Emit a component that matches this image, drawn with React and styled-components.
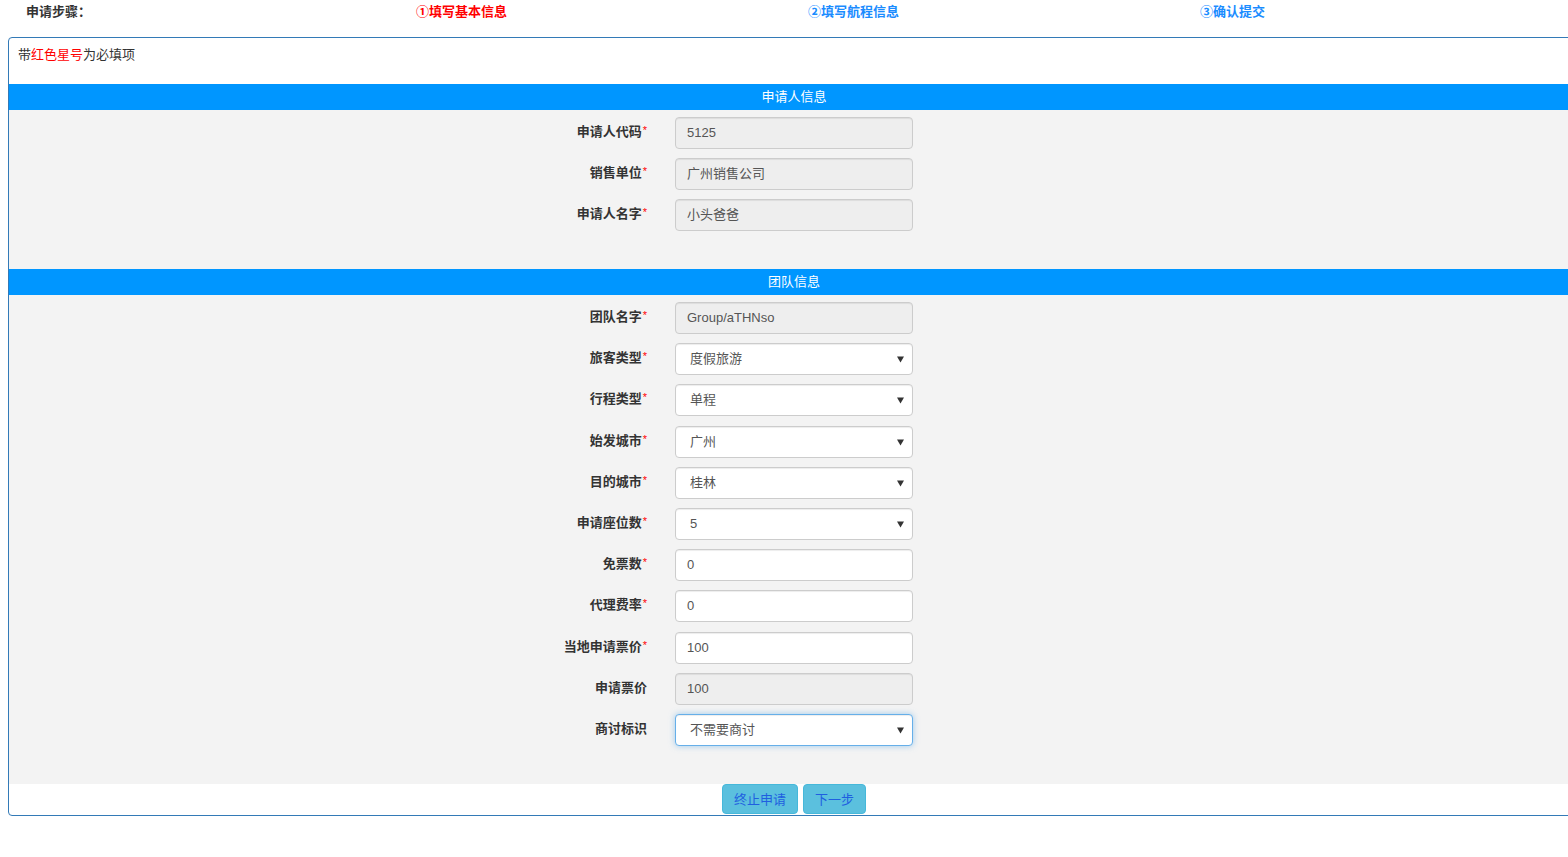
import React from "react";
import styled, { createGlobalStyle } from "styled-components";

const GlobalStyle = createGlobalStyle`
  html, body {
    margin: 0;
    padding: 0;
    background: #fff;
    overflow: hidden;
  }
  body {
    font-family: "Liberation Sans", "Noto Sans CJK SC", sans-serif;
    font-size: 13px;
    color: #333;
  }
`;

const Page = styled.div`
  width: 1568px;
`;

const Steps = styled.ul`
  display: grid;
  grid-template-columns: repeat(4, 392px);
  margin: 0;
  padding: 0;
  list-style: none;
  height: 24px;
  margin-bottom: 13px;
`;

const Step = styled.li`
  padding-left: ${(p) => (p.$first ? "26px" : "24px")};
  line-height: 24px;
  font-weight: 700;
  font-size: 13px;
  color: ${(p) => p.$color || "#333"};
`;

const Panel = styled.div`
  margin-left: 8px;
  width: 1572px;
  box-sizing: border-box;
  border: 1px solid #337ab7;
  border-radius: 4px;
  overflow: hidden;
`;

const Note = styled.div`
  padding: 8px 9px 20px;
  line-height: 18px;
  color: #333;
`;

const Red = styled.span`
  color: #f00;
`;

const SectionTitle = styled.div`
  height: 26px;
  line-height: 26px;
  background: #0096ff;
  color: #fff;
  text-align: center;
  font-size: 13px;
`;

const Section = styled.div`
  background: #f3f3f3;
  padding: 7px 0 ${(p) => p.$bottom}px;
  display: flex;
  flex-direction: column;
  gap: ${(p) => p.$gap}px;
`;

const Row = styled.div`
  display: grid;
  grid-template-columns: 1fr 238px 1fr;
  align-items: center;
  height: 32px;
`;

const Label = styled.label`
  text-align: right;
  padding-right: 28px;
  font-weight: 700;
  color: #333;
  line-height: 18px;
  margin-top: -2px;
`;

const Star = styled.span`
  color: #f00;
  font-weight: 400;
  font-size: 11px;
  line-height: 0;
  vertical-align: 2px;
  margin-left: 1px;
`;

const Field = styled.div`
  position: relative;
  height: 32px;
  box-sizing: border-box;
  border: 1px solid ${(p) => (p.$focus ? "#66afe9" : "#ccc")};
  border-radius: 4px;
  background: ${(p) => (p.$readOnly ? "#eee" : "#fff")};
  box-shadow: ${(p) =>
    p.$focus
      ? "inset 0 1px 1px rgba(0,0,0,.075), 0 0 6px rgba(102,175,233,.6)"
      : "inset 0 1px 1px rgba(0,0,0,.075)"};
  padding-left: ${(p) => (p.$select ? "14px" : "11px")};
  line-height: 30px;
  color: #555;
  font-size: 13px;
`;

const Arrow = styled.svg`
  position: absolute;
  right: 8px;
  top: 12px;
  width: 7px;
  height: 7px;
`;

const Footer = styled.div`
  display: flex;
  justify-content: center;
  gap: 5px;
  height: 31px;
`;

const Button = styled.button`
  height: 30px;
  padding: 0 11px;
  border: 1px solid #46b8da;
  border-radius: 4px;
  background: #5bc0de;
  color: #1f5fe0;
  font-family: "Liberation Sans", "Noto Sans CJK SC", sans-serif;
  font-size: 13px;
  cursor: pointer;
`;

const FormRow = ({ label, required = true, value, readOnly, select, focus }) => (
  <Row>
    <Label>
      {label}
      {required && <Star>*</Star>}
    </Label>
    <Field $readOnly={readOnly} $select={select} $focus={focus}>
      {value}
      {select && (
        <Arrow viewBox="0 0 7 7">
          <path d="M0 0.5 H7 L3.5 6.5 Z" fill="#333" />
        </Arrow>
      )}
    </Field>
    <div />
  </Row>
);

const applicant = [
  { label: "申请人代码", value: "5125", readOnly: true },
  { label: "销售单位", value: "广州销售公司", readOnly: true },
  { label: "申请人名字", value: "小头爸爸", readOnly: true },
];

const team = [
  { label: "团队名字", value: "Group/aTHNso", readOnly: true },
  { label: "旅客类型", value: "度假旅游", select: true },
  { label: "行程类型", value: "单程", select: true },
  { label: "始发城市", value: "广州", select: true },
  { label: "目的城市", value: "桂林", select: true },
  { label: "申请座位数", value: "5", select: true },
  { label: "免票数", value: "0" },
  { label: "代理费率", value: "0" },
  { label: "当地申请票价", value: "100" },
  { label: "申请票价", value: "100", readOnly: true, required: false },
  { label: "商讨标识", value: "不需要商讨", select: true, focus: true, required: false },
];

export default function App() {
  return (
    <Page>
      <GlobalStyle />
      <Steps>
        <Step $first>申请步骤：</Step>
        <Step $color="#f00">①填写基本信息</Step>
        <Step $color="#1a8cff">②填写航程信息</Step>
        <Step $color="#1a8cff">③确认提交</Step>
      </Steps>
      <Panel>
        <Note>
          带<Red>红色星号</Red>为必填项
        </Note>
        <SectionTitle>申请人信息</SectionTitle>
        <Section $gap={9} $bottom={38}>
          {applicant.map((r) => (
            <FormRow key={r.label} {...r} />
          ))}
        </Section>
        <SectionTitle>团队信息</SectionTitle>
        <Section $gap={9.2} $bottom={38}>
          {team.map((r) => (
            <FormRow key={r.label} {...r} />
          ))}
        </Section>
        <Footer>
          <Button>终止申请</Button>
          <Button>下一步</Button>
        </Footer>
      </Panel>
    </Page>
  );
}
